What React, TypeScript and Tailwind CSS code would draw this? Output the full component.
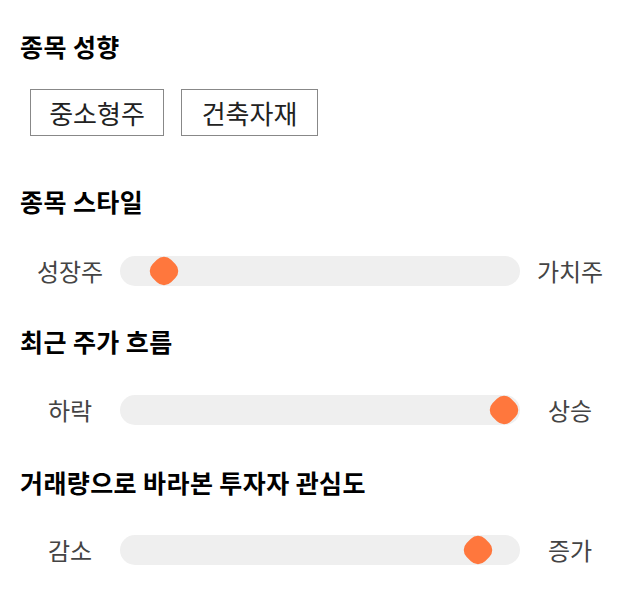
import React from 'react';

const FONT = { fontFamily: '"Noto Sans CJK KR", "Noto Sans", sans-serif' };

function Slider({ left, right, pos }: { left: string; right: string; pos: number }) {
  return (
    <div className="flex items-center h-[30px]">
      <div className="w-[100px] text-center text-[24px] leading-[30px] text-[#444]">{left}</div>
      <div className="relative flex-1 h-[30px] rounded-full bg-[#efefef]">
        <div
          className="absolute top-1/2 w-[26px] h-[26px] -translate-x-1/2 -translate-y-1/2 rotate-45 rounded-[10px] bg-[#ff773d]"
          style={{ left: `${pos}%` }}
        />
      </div>
      <div className="w-[100px] text-center text-[24px] leading-[30px] text-[#444]">{right}</div>
    </div>
  );
}

export default function App() {
  return (
    <div className="w-[640px] h-[606px] bg-white px-5 pt-[31px]" style={FONT}>
      <h2 className="text-[25px] font-bold leading-[30px] tracking-[0.4px] text-black">종목 성향</h2>
      <div className="mt-7 ml-[10px] flex gap-[17px]">
        <div className="h-[47px] w-[134px] flex items-center justify-center border border-[#888] text-[26px] text-[#222]">
          중소형주
        </div>
        <div className="h-[47px] w-[137px] flex items-center justify-center border border-[#888] text-[26px] text-[#222]">
          건축자재
        </div>
      </div>

      <h2 className="mt-[50px] text-[25px] font-bold leading-[30px] tracking-[0.4px] text-black">종목 스타일</h2>
      <div className="mt-[40px]">
        <Slider left="성장주" right="가치주" pos={11} />
      </div>

      <h2 className="mt-[40px] text-[25px] font-bold leading-[30px] tracking-[0.4px] text-black">최근 주가 흐름</h2>
      <div className="mt-[39px]">
        <Slider left="하락" right="상승" pos={96} />
      </div>

      <h2 className="mt-[42px] text-[25px] font-bold leading-[30px] tracking-[0.4px] text-black">거래량으로 바라본 투자자 관심도</h2>
      <div className="mt-[38px]">
        <Slider left="감소" right="증가" pos={89.5} />
      </div>
    </div>
  );
}
